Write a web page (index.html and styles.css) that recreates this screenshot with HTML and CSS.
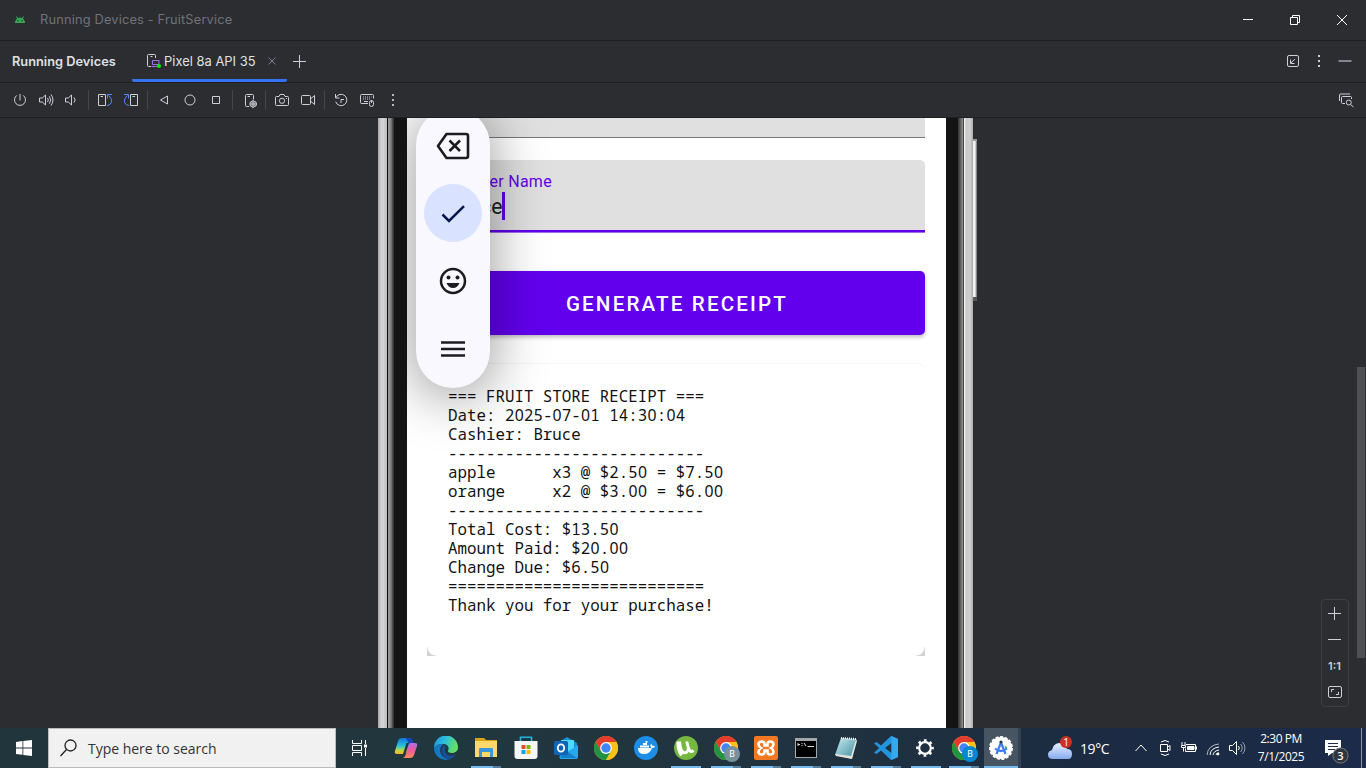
FILE: index.html
```html
<!DOCTYPE html>
<html lang="en">
<head>
<meta charset="utf-8">
<title>Running Devices - FruitService</title>
<link rel="stylesheet" href="styles.css">
</head>
<body>
<svg class="defs" width="0" height="0">
  <defs>
    <linearGradient id="edgeG" x1="0" y1="0" x2="1" y2=".3"><stop offset="0" stop-color="#1c8fdc"/><stop offset=".5" stop-color="#2cc0dd"/><stop offset="1" stop-color="#62e064"/></linearGradient>
    <linearGradient id="copL" x1="0" y1="0" x2="0" y2="1"><stop offset="0" stop-color="#1473d8"/><stop offset=".5" stop-color="#25c5d8"/><stop offset=".75" stop-color="#b8d94a"/><stop offset="1" stop-color="#f7b52c"/></linearGradient>
    <linearGradient id="copR" x1="0" y1="0" x2="0" y2="1"><stop offset="0" stop-color="#b06be8"/><stop offset=".5" stop-color="#ee5c9a"/><stop offset="1" stop-color="#f98a55"/></linearGradient>
    <linearGradient id="cloudG" x1="0" y1="0" x2="0" y2="1"><stop offset="0" stop-color="#e9f0ff"/><stop offset="1" stop-color="#86abf0"/></linearGradient>
    <linearGradient id="noteG" x1="0" y1="0" x2="1" y2="1"><stop offset="0" stop-color="#c9eef3"/><stop offset="1" stop-color="#3e8b9d"/></linearGradient>
    <symbol id="chrome" viewBox="0 0 24 24">
      <circle cx="12" cy="12" r="12" fill="#fbc116"/>
      <path d="M1.6 6A12 12 0 0 1 22.4 6H12L6.8 15z" fill="#e33b2e"/>
      <path d="M1.6 6A12 12 0 0 0 12 24l5.2-9-10.4 0z" fill="#229342"/>
      <path d="M12 6H22.4A12 12 0 0 1 12 24l5.2-9z" fill="#fbc116"/>
      <circle cx="12" cy="12" r="5.9" fill="#fff"/><circle cx="12" cy="12" r="4.7" fill="#4285f4"/>
    </symbol>
  </defs>
</svg>
<div class="app">
  <header class="titlebar">
    <svg class="droid" width="12" height="8" viewBox="0 0 12 8"><path d="M1 7C1 5 2 3.500 3.200 2.500L2 .7l.8-.4L4 2a5.400 5.400 0 0 1 4 0L9.200.3l.8.4L8.800 2.500C10 3.500 11 5 11 7z" fill="#34a853"/><circle cx="4" cy="4.800" r=".7" fill="#2b2d30"/><circle cx="8" cy="4.800" r=".7" fill="#2b2d30"/></svg>
    <span class="title">Running Devices - FruitService</span>
    <div class="winbtns">
      <svg width="47" height="40" viewBox="0 0 47 40"><path d="M18 19.500h10" stroke="#fff"/></svg>
      <svg width="47" height="40" viewBox="0 0 47 40" fill="none" stroke="#fff"><path d="M18.500 17.500h7v7h-7zM20.500 17v-1.500h7v7H26"/></svg>
      <svg width="47" height="40" viewBox="0 0 47 40"><path d="M18 15l10 10M28 15l-10 10" stroke="#fff"/></svg>
    </div>
  </header>

  <nav class="tabs">
    <span class="tool-name">Running Devices</span>
    <div class="tab">
      <svg width="14" height="16" viewBox="0 0 14 16" fill="none"><path d="M4 13.500H1.500Q.5 13.500.5 12.500v-10Q.5 1.500 1.500 1.500h6Q8.500 1.500 8.500 2.500V5M3.500 3.500h2" stroke="#ced0d6"/><path d="M5.500 7.500h6.500v4H5.500zM4.500 13.500H10" stroke="#a571e6"/><circle cx="12" cy="13" r="2" fill="#00f000"/></svg>
      <span>Pixel 8a API 35</span>
      <svg width="8" height="8" viewBox="0 0 8 8"><path d="M.5.5l7 7M7.500.5l-7 7" stroke="#7d8087"/></svg>
    </div>
    <svg class="plus" width="13" height="13" viewBox="0 0 13 13"><path d="M6.500 0v13M0 6.500h13" stroke="#ced0d6"/></svg>
    <div class="tabs-right">
      <svg width="26" height="16" viewBox="0 0 26 16" fill="none" stroke="#ced0d6"><rect x="7.500" y="2.500" width="11" height="11" rx="1.500"/><path d="M15 6l-4 4M10.500 6.500v4h4"/></svg>
      <svg width="26" height="16" viewBox="0 0 26 16" fill="#ced0d6"><path d="M12 2h2v2h-2zM12 7h2v2h-2zM12 12h2v2h-2z"/></svg>
      <svg width="26" height="16" viewBox="0 0 26 16"><path d="M6.500 8h13" stroke="#85878c" stroke-width="2"/></svg>
    </div>
  </nav>

  <div class="toolbar">
    <svg class="ic" viewBox="0 0 16 16"><path d="M8 2v6.500M4.800 3.400a5.500 5.500 0 1 0 6.400 0"/></svg>
    <svg class="ic" viewBox="0 0 16 16"><path d="M1.500 6v4h2.800l3.200 3V3L4.300 6zM9.500 6q1.700 2 0 4M11.300 4.300q3 3.700 0 7.400M13 2.500q4 5.500 0 11"/></svg>
    <svg class="ic" viewBox="0 0 16 16"><path d="M1.500 6v4h2.800l3.200 3V3L4.300 6zM10 5.500q2.200 2.500 0 5"/></svg>
    <i class="sep"></i>
    <svg class="ic" viewBox="0 0 16 16"><path d="M1.500 2.500h7v11h-7zM3.500 4.500H6"/><path class="bl" d="M10 13.500C15.500 13 16 7 11.500 3.500M10.500 6.500v-4H15"/></svg>
    <svg class="ic" viewBox="0 0 16 16"><path d="M7.500 2.500h7v11h-7zM9.500 4.500H12"/><path class="bl" d="M6 13.500C.5 13 0 7 4.500 3.500M5.500 6.500v-4H1"/></svg>
    <i class="sep"></i>
    <svg class="ic" viewBox="0 0 16 16"><path d="M4.500 8l7-4v8z"/></svg>
    <svg class="ic" viewBox="0 0 16 16"><circle cx="8" cy="8" r="5"/></svg>
    <svg class="ic" viewBox="0 0 16 16"><path d="M4.500 4.500h7v7h-7z"/></svg>
    <i class="sep"></i>
    <svg class="ic" viewBox="0 0 16 16"><path d="M8 14.500H5.500q-1 0-1-1v-10q0-1 1-1h6q1 0 1 1v4M6.500 4.500h2.500"/><path fill="#777a80" d="M12 8.500l3.300 2v3l-3.300 2-3-2v-3z"/><circle cx="12.200" cy="12" r="1.200"/></svg>
    <i class="sep"></i>
    <svg class="ic" viewBox="0 0 16 16"><path d="M2.500 4.500H5l1-2h4l1 2h2.500q1 0 1 1v7q0 1-1 1h-11q-1 0-1-1v-7q0-1 1-1z"/><circle cx="8" cy="8.800" r="2.600"/><path d="M12 6.500h1"/></svg>
    <svg class="ic" viewBox="0 0 16 16"><path d="M2.500 3.500h7q1 0 1 1v7q0 1-1 1h-7q-1 0-1-1v-7q0-1 1-1zM10.500 7l4-3.500v9l-4-3.500"/></svg>
    <i class="sep"></i>
    <svg class="ic" viewBox="0 0 16 16"><path d="M2.500 2v4h4M3 5.500a5.700 5.700 0 1 1-.3 4.200M11 7.500H8v3.500"/></svg>
    <svg class="ic" viewBox="0 0 16 16"><path d="M9 11.500H2.500q-1 0-1-1v-7q0-1 1-1h11q1 0 1 1v3M5 9.500h4"/><path stroke-dasharray="1 1" d="M4 5h8.500M4 7h7"/><rect x="10.500" y="8.500" width="4" height="6" rx="2"/><path d="M12.500 8.500v2.500"/></svg>
    <svg class="ic" viewBox="0 0 16 16"><path class="dots" d="M7 2h2v2H7zM7 7h2v2H7zM7 12h2v2H7z"/></svg>
    <svg class="ic last" viewBox="0 0 16 16"><path d="M1.500 9V3q0-1 1-1H12M7 11.500H4.500q-1 0-1-1v-5q0-1 1-1h8q1 0 1 1V7"/><circle cx="10.800" cy="10.500" r="2.500"/><path d="M12.500 12.500l3 2.500"/></svg>
  </div>

  <main class="canvas">
    <div class="phone">
      <div class="bezel-left"></div>
      <div class="screen">
        <div class="field prev"></div>
        <div class="field active">
          <label>Cashier Name</label>
          <div class="value">Bruce<i class="caret"></i></div>
        </div>
        <button class="generate">GENERATE RECEIPT</button>
        <div class="card">
          <div class="line"><span>=== FRUIT STORE RECEIPT ===</span></div>
          <div class="line"><span>Date: 2</span><i>0</i><span>25-</span><i>0</i><span>7-</span><i>0</i><span>1 14:3</span><i>0</i><span>:</span><i>0</i><span>4</span></div>
          <div class="line"><span>Cashier: Bruce</span></div>
          <div class="line"><span>---------------------------</span></div>
          <div class="line"><span>apple      x3 @ $2.5</span><i>0</i><span> = $7.5</span><i>0</i></div>
          <div class="line"><span>orange     x2 @ $3.</span><i>0</i><i>0</i><span> = $6.</span><i>0</i><i>0</i></div>
          <div class="line"><span>---------------------------</span></div>
          <div class="line"><span>Total Cost: $13.5</span><i>0</i></div>
          <div class="line"><span>Amount Paid: $2</span><i>0</i><span>.</span><i>0</i><i>0</i></div>
          <div class="line"><span>Change Due: $6.5</span><i>0</i></div>
          <div class="line"><span>===========================</span></div>
          <div class="line"><span>Thank you for your purchase!</span></div>
        </div>
        <div class="palette">
          <svg width="34" height="28" viewBox="0 0 34 28" fill="none" stroke="#1b1b21" stroke-width="2.600"><path d="M10.500 2H30q2 0 2 2v20q0 2-2 2H10.500L2 14z" stroke-linejoin="round"/><path d="M13.500 8.500l10.500 10.500M24 8.500L13.500 19"/></svg>
          <div class="ok"><svg width="24" height="20" viewBox="0 0 24 20"><path d="M1.500 11.500l6.500 6.500L23 3.200" fill="none" stroke="#06174b" stroke-width="2.500"/></svg></div>
          <svg class="smile" width="28" height="28" viewBox="0 0 28 28"><circle cx="14" cy="14" r="12" fill="none" stroke="#1b1b21" stroke-width="2.500"/><circle cx="9.500" cy="10.500" r="2" fill="#1b1b21"/><circle cx="18.500" cy="10.500" r="2" fill="#1b1b21"/><path d="M7.500 16h13q-2 5-6.500 5t-6.500-5z" fill="#1b1b21"/></svg>
          <svg class="menu" width="24" height="18" viewBox="0 0 24 18"><path d="M0 2.500h24M0 9h24M0 15.500h24" stroke="#1b1b21" stroke-width="2.500"/></svg>
        </div>
      </div>
      <div class="bezel-right"></div>
      <div class="power"></div>
    </div>
    <div class="zoom">
      <svg width="13" height="13" viewBox="0 0 13 13"><path d="M6.500 0v13M0 6.500h13" stroke="#ced0d6"/></svg>
      <svg width="13" height="13" viewBox="0 0 13 13"><path d="M0 6.500h13" stroke="#ced0d6"/></svg>
      <span>1:1</span>
      <svg width="14" height="12" viewBox="0 0 14 12" fill="none" stroke="#ced0d6"><rect x=".5" y=".5" width="13" height="11" rx="1.500"/><path d="M3.500 6V3.500H6M8 8.500h2.500V6"/></svg>
    </div>
    <div class="scroll"></div>
  </main>

  <footer class="taskbar">
    <div class="start"><svg width="16" height="16" viewBox="0 0 16 16" fill="#fff"><path d="M0 2l6.500-.9v6.400H0zM7.300 1L16 0v7.500H7.300zM0 8.500h6.500v6.300L0 14zM7.300 8.500H16V16l-8.700-1z"/></svg></div>
    <div class="search">
      <svg width="17" height="18" viewBox="0 0 17 18" fill="none" stroke="#222" stroke-width="1.300"><circle cx="10.500" cy="6.500" r="5.500"/><path d="M6.500 10.500L.5 17"/></svg>
      <span>Type here to search</span>
    </div>
    <div class="taskview"><svg width="17" height="16" viewBox="0 0 17 16" fill="none" stroke="#fff"><path d="M1.500 0v3.500h9V0M1.500 16v-3.500h9V16M1.500 5.500h9v5h-9zM14.500 0v4M14.500 8v8"/><path d="M13 4.500h3v3h-3z" fill="#fff" stroke="none"/></svg></div>
    <div class="apps">
      <div class="a"><svg viewBox="0 0 24 24"><path d="M7 2h9q2 0 1 3l-3.500 10q-1 3-4 3H3q-3 0-2-3L4 5q1-3 3-3z" fill="url(#copL)"/><path d="M12 2h4q2 0 2.500 2L20 8h-5z" fill="#1746b8"/><path d="M16 7h5q3 0 2 3l-3 9q-1 3-4 3H9q2-1 3-4l2.300-8Q15 7 16 7z" fill="url(#copR)"/><path d="M12.500 7h2.500l-3.500 11H9z" fill="#23353e"/></svg></div>
      <div class="a"><svg viewBox="0 0 24 24"><path d="M0 12A12 12 0 0 1 24 11c.3 4-3 6-6 6-3 0-4.500-1-4-2.500 1.500-2 .5-6-4-6.500C6 7.500 2 9 0 12z" fill="url(#edgeG)"/><path d="M0 12C2 9 6 7.500 9.500 8c-3 2-4.500 6-2.500 10 2 3.500 6 6 9 5.300A12 12 0 0 1 0 12z" fill="#1577c8"/><path d="M9.500 9.500C6 13 7 21 14 23.700c4-.7 7-3.700 8-5.700-4 3-11 1.500-11-4 0-1 .3-2 1-3-.6-1-1.500-1.500-2.500-1.500z" fill="#174f94"/></svg></div>
      <div class="a run two"><svg viewBox="0 0 24 24"><path d="M1 2h9l2 2h11v17H1z" fill="#dda017"/><path d="M1 5h22v16H1z" fill="#ffd76a"/><path d="M5 21v-8q0-1 1-1h12q1 0 1 1v8h-3v-5H8v5z" fill="#3c96dc"/></svg></div>
      <div class="a"><svg viewBox="0 0 24 24"><path d="M6.500 6V1.200h11V6" fill="none" stroke="#22b4dd" stroke-width="1.600"/><path d="M.5 5h23v15q0 3-3 3h-17q-3 0-3-3z" fill="#f5f6f8"/><path d="M7.500 9h4v4h-4z" fill="#e84c2b"/><path d="M12.500 9h4v4h-4z" fill="#7fba00"/><path d="M7.500 14h4v4h-4z" fill="#00a4ef"/><path d="M12.500 14h4v4h-4z" fill="#ffb900"/></svg></div>
      <div class="a"><svg viewBox="0 0 24 24"><path d="M5 6l8-5 10 6v14q0 2-2 2H6z" fill="#1490df"/><path d="M7 4h13v12H7z" fill="#50d9ff"/><path d="M5 21l19-12v12q0 2-2 2H7z" fill="#28a8ea"/><path d="M5 10l18 12H7z" fill="#1280cc"/><rect y="5" width="14" height="14" rx="1.500" fill="#0f64b5"/><ellipse cx="7" cy="12" rx="3.200" ry="3.700" fill="none" stroke="#fff" stroke-width="1.800"/></svg></div>
      <div class="a"><svg><use href="#chrome"/></svg></div>
      <div class="a"><svg viewBox="0 0 24 24"><circle cx="12" cy="12" r="12" fill="#1d8ee8"/><path d="M4 12h13q0-2-1-3 2-2 2.500 1 2-.5 2.500.5-1 1.500-3 1.500-2 6-8 6-6 0-6-6zM6 9.500h9v2H6zM9 7h4v2H9zM11.500 5H13.500v1.700h-2z" fill="#fff"/></svg></div>
      <div class="a run"><svg viewBox="0 0 24 24"><circle cx="12" cy="12" r="12" fill="#76b83f"/><path d="M5.500 5.500q1 10 4 11 4 1 5-4l-1.800-7M14.500 12q1.500 5.500 5 2.500M4 5.500q-.5 8 3.500 14" fill="none" stroke="#fff" stroke-width="3"/></svg></div>
      <div class="a run two"><svg><use href="#chrome"/></svg><b>B</b></div>
      <div class="a run two"><svg viewBox="0 0 24 24"><rect width="24" height="24" rx="2" fill="#f27821"/><path d="M8 5.500Q4.500 5.500 4.500 8.300q0 2.200 2.500 3.700-2.500 1.500-2.500 3.700 0 2.800 3.500 2.800 2.500 0 2.500-2.800v-1.200h3v1.200q0 2.800 2.500 2.800 3.500 0 3.500-2.800 0-2.200-2.500-3.700 2.500-1.500 2.500-3.700 0-2.800-3.500-2.800-2.500 0-2.500 2.800v1.200h-3V8.300Q10.500 5.500 8 5.500z" fill="none" stroke="#fff" stroke-width="2.600"/></svg></div>
      <div class="a run two"><svg viewBox="0 0 24 24"><path d="M1 2h22v20H1z" fill="#a4a8ac"/><path d="M2 5h20v16H2z" fill="#000"/><path d="M4 8.500h2M4 7v3M8 7v1M8 9v1M10 7l2 3M13.500 10.500H20" stroke="#ddd"/></svg></div>
      <div class="a run two"><svg viewBox="0 0 24 24"><path d="M7 2l15 1-4 20L1 19z" fill="url(#noteG)"/><path d="M1 18l16 2 5-17 1 2-5 18L2 20z" fill="#e5e4dc"/><path d="M7 2l15 1" stroke="#fff" stroke-dasharray="1 1" stroke-width="2"/></svg></div>
      <div class="a run two"><svg viewBox="0 0 24 24"><path d="M17 0l7 3v18l-7 3L7 14.500 2.500 18 0 16.700 5.200 12 0 7.300 2.500 6 7 9.500zM17.500 7L11 12l6.500 5z" fill="#2196df"/><path d="M17.500 0l6.500 3v18l-6.500 3z" fill="#36a8ee"/></svg></div>
      <div class="a run set"><svg viewBox="0 0 24 24" fill="none" stroke="#fff"><circle cx="12" cy="12" r="7" stroke-width="2.600"/><circle cx="12" cy="12" r="9.200" stroke-width="2.800" stroke-dasharray="3.200 4.026" stroke-dashoffset="1.600"/></svg></div>
      <div class="a run two"><svg><use href="#chrome"/></svg><b class="blue">B</b></div>
      <div class="a run current"><svg viewBox="0 0 24 24"><circle cx="12" cy="12" r="11" fill="#fff"/><circle cx="12" cy="12" r="11" fill="none" stroke="#fff" stroke-width="2" stroke-dasharray="3 1.600"/><path d="M12 6.500L7.500 18M12 6.500L16.500 18M6 12.500q6 5 12 0" fill="none" stroke="#3e7cf0" stroke-width="2.200"/><circle cx="12" cy="6" r="1.600" fill="#26374b"/><path d="M15.500 9.500l3 2-2 1.500z" fill="#34a853"/></svg></div>
    </div>
    <div class="weather">
      <svg width="26" height="24" viewBox="0 0 26 24"><path d="M5 23q-5 0-5-4.500Q0 15 4 14q1-6 7-7 6 0 8 6 5 0 5 5t-4 5z" fill="url(#cloudG)"/><circle cx="18" cy="6" r="6" fill="#cf2e23"/><text x="18" y="9.700" text-anchor="middle" font-family="Open Sans" font-size="10" fill="#fff">1</text></svg>
      <span>19°C</span>
    </div>
    <div class="tray">
      <svg width="24" height="18" viewBox="0 0 24 18"><path d="M6.500 12l5.500-6 5.500 6"/></svg>
      <svg width="24" height="18" viewBox="0 0 24 18"><path d="M7.500 5.500h7v7h-7zM14.500 8l2.500-1.500v5L14.500 10M8 3q4-3 8 0M8 15q4 3 8 0"/></svg>
      <svg width="24" height="18" viewBox="0 0 24 18"><path d="M9 5.500h9.500v7H8.500v-3M19.500 7.500v3M5 3v3M8 3v3M4.500 6.500h4v2h-4zM6.500 9v3.500"/><path d="M10.500 7.500h6.500v3h-6.500z" fill="#fff"/></svg>
      <svg class="wifi" width="24" height="18" viewBox="0 0 24 18"><path d="M6 16Q7 6 18 5" stroke-opacity=".65"/><path d="M9 16Q9.500 9 18 8M12 16q.5-4 6-5M15 16q0-2 3-2"/><circle cx="17" cy="15" r="1" fill="#fff"/></svg>
      <svg width="24" height="18" viewBox="0 0 24 18"><path d="M4.500 6.500h3l4-4v13l-4-4h-3zM13.500 7q1.500 2 0 4"/><path d="M15.500 5q3.500 4 0 8M17.500 3q5 6 0 12" stroke-opacity=".55"/></svg>
    </div>
    <div class="clock"><span>2:30 PM</span><span>7/1/2025</span></div>
    <div class="notify"><svg width="26" height="26" viewBox="0 0 26 26"><path d="M1 1h16v13H8l-4 3v-3H1z" fill="#fff"/><path d="M4 4.500h10M4 7.500h10M4 10.500h7" stroke="#1e2e45"/><circle cx="16.500" cy="16.500" r="7.600" fill="#30343b" stroke="#777c83"/><text x="16.500" y="20.500" text-anchor="middle" font-family="Open Sans" font-weight="600" font-size="11" fill="#fff">3</text></svg></div>
  </footer>
</div>
</body>
</html>
```

FILE: styles.css
```css
* { box-sizing: border-box; }
body { margin: 0; background: #2b2d30; overflow: hidden; }
svg { display: block; flex: none; }
.defs { position: absolute; }
.app { width: 1366px; height: 768px; display: flex; flex-direction: column; font-family: Inter, sans-serif; font-size: 13px; color: #dfe1e5; }

.titlebar { height: 41px; flex: none; display: flex; align-items: center; border-bottom: 1px solid #1e1f22; padding-left: 14px; }
.title { margin-left: 14px; padding-bottom: 2px; color: #6f737a; font-size: 12.800px; letter-spacing: .18px; }
.winbtns { margin-left: auto; display: flex; }

.tabs { height: 42px; flex: none; display: flex; align-items: center; border-bottom: 1px solid #1e1f22; }
.tool-name { margin-left: 12px; width: 120px; font-weight: 600; font-size: 12.800px; white-space: nowrap; }
.tab { height: 41px; width: 155px; display: flex; align-items: center; padding: 1px 0 0 15px; border-bottom: 3px solid #3574f0; border-radius: 0 0 2px 2px; font-size: 12.950px; }
.tab svg { margin-top: 1px; }
.tab span { margin: 1px 10px 0 3px; width: 94px; white-space: nowrap; }
.plus { margin: 0 0 1px 6px; }
.tabs-right { margin-left: auto; margin-right: 8px; margin-bottom: 1px; display: flex; }

.toolbar { height: 35px; flex: none; display: flex; align-items: center; border-bottom: 1px solid #1e1f22; padding-left: 7px; }
.ic { width: 26px; height: 16px; fill: none; stroke: #ced0d6; }
.ic .bl { stroke: #548af7; }
.ic .dots { fill: #b5b7bc; stroke: none; }
.ic.last { margin-left: auto; margin-right: 7px; }
.sep { width: 7px; height: 20px; background: linear-gradient(#43454a, #43454a) 3px 0 / 1px 20px no-repeat; }

.canvas { height: 610px; flex: none; position: relative; overflow: hidden; display: flex; }
.phone { margin-left: 378px; width: 599px; display: flex; }
.bezel-left { width: 29px; background: linear-gradient(90deg, #a2a2a2 0, #c8c8c8 2px, #d6d6d6 5px, #bcbcbc 9px, #111 9px, #111 10px, #989898 10px, #858585 13px, #555 14px, #303030 16px, #141414 16px); }
.screen { width: 539px; background: #fff; position: relative; overflow: hidden; padding: 0 21px 0 20px; display: flex; flex-direction: column; font-family: Roboto, sans-serif; }
.bezel-right { width: 27px; background: linear-gradient(90deg, #141414 12px, #333 12px, #686868 15px, #999 17px, #454545 17px, #454545 18px, #eee 18px, #eee 19px, #c6c6c6 20px, #d0d0d0 24px, #aaa 27px); }
.power { width: 4px; height: 162px; margin-top: 21px; background: linear-gradient(90deg, #f2f2f2 2px, #aaa 3px, #666); border-top: 2px solid #999; border-bottom: 4px solid #555; }

.field { flex: none; background: #e0e0e0; }
.prev { height: 20px; border-bottom: 1px solid #777; }
.active { margin-top: 21.500px; height: 73px; border-radius: 5px 5px 0 0; background: linear-gradient(#6200ee, #6200ee) 0 100% / 100% 2.500px no-repeat #e0e0e0; padding: 12.500px 0 0 21px; }
.active label { display: block; font-size: 16px; line-height: 20px; color: #6200ee; letter-spacing: .28px; }
.value { display: flex; font-size: 21.200px; line-height: 30px; color: #222; }
.caret { width: 2.500px; height: 28px; background: #6200ee; }
.generate { flex: none; margin: 38.500px 0 0; height: 64px; border: 0; border-radius: 5px; background: #6200ee; color: #fff; font: 500 20.600px Roboto, sans-serif; letter-spacing: 2.150px; box-shadow: 0 2px 4px rgba(0,0,0,.28); padding: 2px 0 0 2px; }
.card { flex: none; margin-top: 28px; height: 293px; background:
  radial-gradient(circle at 9px 0, transparent 8px, #d2d2d2 9px) 0 100% / 9px 9px no-repeat,
  radial-gradient(circle at 0 0, transparent 8px, #d2d2d2 9px) 100% 100% / 9px 9px no-repeat, #fff; border-top: 1px solid #f4f4f4; border-radius: 8px 8px 0 0; padding: 23px 21px; }
.line { display: flex; height: 19px; white-space: pre; font: 15.820px/19px "Noto Sans Mono", "DejaVu Sans Mono", monospace; color: #111; }
.line i { width: .6em; text-align: center; font-style: normal; font-family: "Noto Sans", sans-serif; }
.palette { position: absolute; left: 9.400px; top: -10px; width: 74px; height: 280px; border-radius: 37px; background: #f9f8ff; box-shadow: 0 6px 52px 5px rgba(0,0,0,.36); display: flex; flex-direction: column; align-items: center; padding: 24px 1px 0 0; }
.ok { width: 58px; height: 58px; margin-top: 24px; border-radius: 50%; background: #d9e2ff; display: flex; align-items: center; justify-content: center; }
.smile { margin-top: 25px; }
.menu { margin-top: 45px; }

.zoom { margin: 481px 0 0 344px; width: 28px; height: 108px; border: 1px solid #3d3f43; border-radius: 4px; display: flex; flex-direction: column; align-items: center; padding: 7px 1px 0 0; gap: 13px; font-size: 11px; font-weight: 600; color: #ced0d6; }
.zoom span { line-height: 14px; }
.scroll { width: 8px; height: 291px; margin: 249px 0 0 8px; background: #4d4f52; }

.taskbar { height: 40px; flex: none; display: flex; align-items: stretch; background: linear-gradient(90deg, #21353c, #21373e 35%, #20323f 60%, #1c2b42 80%, #1b2b49); font-family: "Open Sans", sans-serif; color: #fff; }
.start { width: 48px; display: flex; align-items: center; justify-content: center; }
.search { width: 288px; background: #f1f1f1; border: 1px solid #bcbcbc; display: flex; align-items: center; padding-left: 11px; color: #333; font-size: 14px; letter-spacing: -.02px; }
.search span { margin-left: 11px; }
.taskview { width: 50px; padding-left: 15px; display: flex; align-items: center; }
.apps { display: flex; width: 636px; }
.a { width: 40px; height: 40px; flex: none; position: relative; display: flex; align-items: center; justify-content: center; }
.a svg { width: 24px; height: 24px; }
.run::after { content: ""; position: absolute; left: 5px; bottom: 0; width: 30px; height: 2px; background: #76b9ed; }
.two::after { background: linear-gradient(90deg, #76b9ed 22px, #557f9c 22px); }
.a b { position: absolute; left: 18px; top: 18px; width: 16px; height: 16px; border-radius: 50%; background: #78909c; font: 9px/16px Roboto, sans-serif; text-align: center; }
.a b.blue { background: #0288d1; }
.set { width: 38px; }
.set svg { width: 20px; height: 20px; }
.current { width: 34px; background: #475562; box-shadow: 3px 0 #334252; }
.current::after { left: 0; width: 34px; }
.weather { width: 107px; padding-left: 26px; display: flex; align-items: center; font-size: 14px; letter-spacing: -.4px; }
.weather span { margin-left: 6px; }
.tray { display: flex; align-items: center; width: 118px; }
.tray svg { fill: none; stroke: #fff; }
.clock { width: 68px; display: flex; flex-direction: column; align-items: center; justify-content: center; font-size: 12px; line-height: 18px; letter-spacing: -.45px; }
.notify { width: 47px; padding: 11px 0 0 9px; border-right: 1px solid #8b94a1; }
```
